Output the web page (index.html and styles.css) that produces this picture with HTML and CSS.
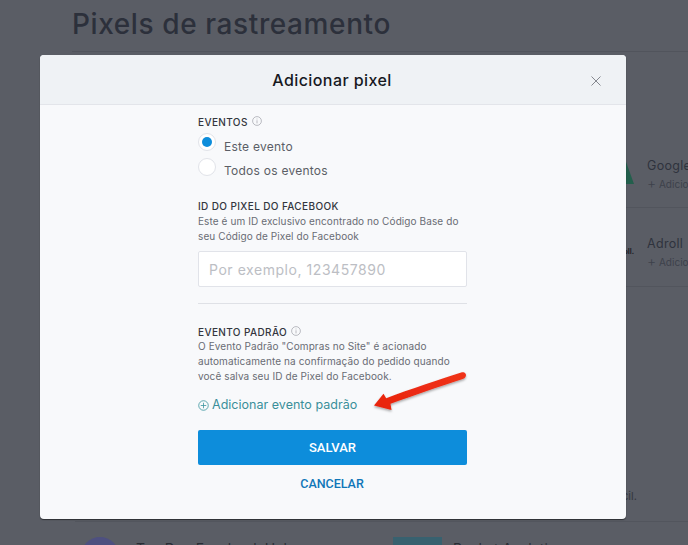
FILE: index.html
```html
<!DOCTYPE html>
<html lang="pt-BR">
<head>
<meta charset="utf-8">
<title>Pixels de rastreamento</title>
<link rel="stylesheet" href="styles.css">
</head>
<body>
<main class="page">
  <h1 class="page-title">Pixels de rastreamento</h1>
  <section class="apps">
    <div class="app app-google">
      <svg class="app-logo" width="22" height="30" viewBox="0 0 22 30"><path d="M13 1 L22 26 H4 Z" fill="#235f4c"/></svg>
      <div><div class="app-name">Google</div><div class="app-add"><span class="plus">+</span> Adicionar</div></div>
    </div>
    <div class="app app-adroll">
      <span class="app-logo-text">oll.</span>
      <div><div class="app-name">Adroll</div><div class="app-add"><span class="plus">+</span> Adicionar</div></div>
    </div>
  </section>
  <p class="hint">fácil.</p>
  <section class="bottom">
    <div class="avatar"></div>
    <div class="bottom-name">Top Dog Facebook Hub</div>
    <div class="square"></div>
    <div class="bottom-name">Bucket Analytics</div>
  </section>
</main>

<div class="modal">
  <header class="modal-head">
    <h2 class="modal-title">Adicionar pixel</h2>
    <svg class="close" width="12" height="12" viewBox="0 0 12 12"><path d="M1.5 1.5 L10.5 10.5 M10.5 1.5 L1.5 10.5" stroke="#85888f" stroke-width="1" fill="none"/></svg>
  </header>
  <form class="form">
    <div class="label">EVENTOS
      <svg class="info" width="10" height="10" viewBox="0 0 10 10"><circle cx="5" cy="5" r="4.4" fill="none" stroke="#a9abb2" stroke-width=".8"/><path d="M5 4.3 V7.4 M5 2.6 V3.4" stroke="#a9abb2" stroke-width=".8"/></svg>
    </div>
    <div class="radio-row first"><span class="radio checked"></span><span>Este evento</span></div>
    <div class="radio-row"><span class="radio"></span><span>Todos os eventos</span></div>

    <div class="label fb">ID DO PIXEL DO FACEBOOK</div>
    <p class="help">Este é um ID exclusivo encontrado no Código Base do seu Código de Pixel do Facebook</p>
    <input class="input" type="text" placeholder="Por exemplo, 123457890">
    <hr class="rule">

    <div class="label">EVENTO PADRÃO
      <svg class="info" width="10" height="10" viewBox="0 0 10 10"><circle cx="5" cy="5" r="4.4" fill="none" stroke="#a9abb2" stroke-width=".8"/><path d="M5 4.3 V7.4 M5 2.6 V3.4" stroke="#a9abb2" stroke-width=".8"/></svg>
    </div>
    <p class="help">O Evento Padrão "Compras no Site" é acionado automaticamente na confirmação do pedido quando você salva seu ID de Pixel do Facebook.</p>
    <a class="add-link" href="#">
      <svg width="11" height="11" viewBox="0 0 12 12"><circle cx="6" cy="6" r="5.2" fill="none" stroke="#3f97a0" stroke-width=".9"/><path d="M6 3 V9 M3 6 H9" stroke="#3f97a0" stroke-width=".9"/></svg>
      <span>Adicionar evento padrão</span>
    </a>
    <button class="save" type="button">SALVAR</button>
    <a class="cancel" href="#">CANCELAR</a>
  </form>
</div>

<svg class="arrow" width="688" height="545" viewBox="0 0 688 545">
  <defs>
    <linearGradient id="g" x1="1" y1="0" x2="0" y2="1"><stop offset="0" stop-color="#f0331a"/><stop offset="1" stop-color="#e8230c"/></linearGradient>
    <filter id="s" x="-20%" y="-30%" width="140%" height="170%"><feDropShadow dx="0" dy="1.5" stdDeviation="1.2" flood-color="#000" flood-opacity=".35"/></filter>
  </defs>
  <path d="M462 372.2 C464.8 371.8 466.6 373.8 465.8 376.2 C465.3 377.8 463.8 378.6 462 379.3 C440 386.5 412 396 390.5 403.8 L391.5 410 L374 405.5 L383.5 393.8 L386.2 398.2 C410 389 440 379.5 462 372.2 Z" fill="url(#g)" filter="url(#s)"/>
</svg>
</body>
</html>
```
FILE: styles.css
```css
* { box-sizing: border-box; }
html, body { margin: 0; height: 545px; overflow: hidden; }
body { background: #5a5d65; font-family: "Inter", "Liberation Sans", sans-serif; position: relative; width: 688px; }

.page { padding: 9px 0 0 72px; height: 545px; overflow: hidden; display: flex; flex-direction: column; color: #2b2f39; }
.page-title { margin: 0; font-size: 28px; line-height: 31px; font-weight: 500; color: #2c303b; padding-bottom: 11px; border-bottom: 1px solid #51545c; letter-spacing: .6px; }
.apps { margin: 102px 0 0 540px; width: 63px; }
.app { display: flex; gap: 13px; height: 79px; border-bottom: 1px solid #52555d; align-items: flex-start; margin-left: -64px; padding-left: 64px; width: 200px; }
.app-google { padding-top: 4px; height: 54px; }
.app-adroll { padding-top: 28px; }
.app-logo { flex: none; }
.app-logo-text { font-size: 7px; font-weight: 700; color: #1d2026; width: 22px; text-align: right; margin-top: 11px; flex: none; }
.app-name { font-size: 12.5px; line-height: 16px; color: #2f333d; letter-spacing: .3px; }
.app-add { font-size: 10px; line-height: 18px; color: #3d414b; white-space: nowrap; }
.plus { font-size: 14px; font-weight: 300; }
.hint { margin: 202px 0 0 540px; font-size: 11px; line-height: 14px; color: #34373f; white-space: nowrap; }
.bottom { border-top: 1px solid #52555d; margin: 18px 0 0 3px; padding: 15px 0 0 6px; display: flex; gap: 17px; flex: none; }
.avatar { width: 38px; height: 38px; border-radius: 50%; background: #4e5080; flex: none; }
.square { width: 49px; height: 30px; background: #38616f; margin-left: 84px; flex: none; }
.bottom-name { font-size: 14px; line-height: 16px; margin-top: 4px; color: #2a2d35; width: 156px; white-space: nowrap; flex: none; }
.square + .bottom-name { margin-left: -6px; }

.modal { position: absolute; left: 40px; top: 55px; width: 586px; height: 464px; background: #f8f9fb; border-radius: 4px; overflow: hidden; box-shadow: 0 1px 1px rgba(0,0,0,.5); }
.modal-head { height: 50px; background: #eff2f5; border-bottom: 1px solid #e3e5ea; display: flex; align-items: center; justify-content: center; position: relative; padding-right: 2px; }
.modal-title { margin: 0; font-size: 16px; font-weight: 500; color: #17191f; letter-spacing: .42px; line-height: 22px; }
.close { position: absolute; right: 24px; top: 20px; }

.form { width: 269px; padding-top: 10px; display: flex; flex-direction: column; margin-left: 158px; }
.label { font-size: 10px; line-height: 14px; font-weight: 500; color: #33363e; letter-spacing: .38px; display: flex; align-items: center; gap: 4px; }
.info { flex: none; position: relative; top: -1px; }
.radio-row { display: flex; align-items: center; gap: 8px; height: 24px; margin-top: 1px; font-size: 12px; color: #5b5e66; letter-spacing: .25px; }
.radio-row span:last-child { position: relative; top: 3px; }
.radio-row.first span:last-child { top: 4px; }
.radio { width: 18px; height: 18px; border-radius: 50%; background: #fff; border: 1px solid #e1e3e9; flex: none; position: relative; }
.radio.checked::after { content: ""; position: absolute; left: 3px; top: 3px; width: 10px; height: 10px; border-radius: 50%; background: #0d8ddb; }
.label.fb { margin: 20px 0 1px; }
.help { margin: 0; font-size: 10px; line-height: 15px; color: #696c74; letter-spacing: .1px; }
.input { display: block; width: 269px; height: 36px; margin-top: 7px; padding: 0 10px; background: #fff; border: 1px solid #e1e3e9; border-radius: 2px; font: 14px "Inter", "Liberation Sans", sans-serif; letter-spacing: .55px; outline: none; }
.input::placeholder { color: #bcbec4; opacity: 1; }
.rule { width: 100%; height: 1px; margin: 16px 0 21px; border: 0; background: #dfe1e6; }
.add-link { display: flex; align-items: center; gap: 3px; margin-top: 13px; color: #3a8f9a; font-size: 12.5px; line-height: 16px; letter-spacing: .02px; text-decoration: none; }
.save { display: block; width: 269px; height: 35px; margin-top: 17px; background: #0d8ddb; color: #fff; border: 0; border-radius: 2px; font: 500 13px "Roboto", "Liberation Sans", sans-serif; }
.cancel { display: block; text-align: center; margin-top: 11px; padding-right: 1px; color: #1076b8; font: 500 12.5px/16px "Roboto", "Liberation Sans", sans-serif; text-decoration: none; }

.arrow { position: absolute; left: 0; top: 0; pointer-events: none; }
```
